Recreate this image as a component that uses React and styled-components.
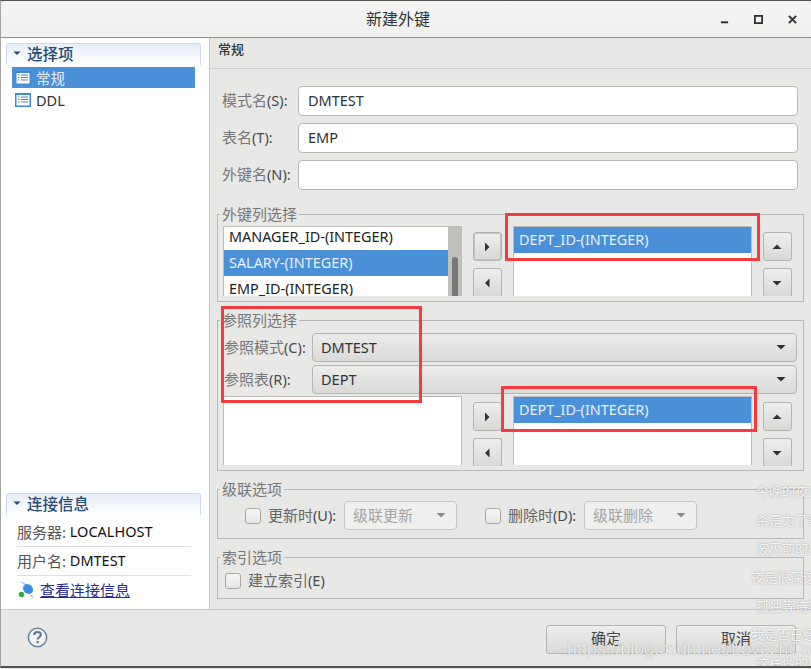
import React from 'react';
import styled, { createGlobalStyle } from 'styled-components';

const Global = createGlobalStyle`
  html, body { margin: 0; padding: 0; background: #e8e8e7; overflow: hidden; }
  * { box-sizing: border-box; }
  body { font-family: "Noto Sans", "Noto Sans CJK SC", sans-serif; font-size: 14.5px; color: #2e3436; }
`;

const Window = styled.div`
  position: relative;
  width: 811px;
  height: 668px;
  display: flex;
  flex-direction: column;
  overflow: hidden;
  background: #e8e8e7;
  border-top: 1px solid #55534f;
  border-bottom: 2px solid #55534f;
  border-left: 1px solid #a5a5a2;
`;

const TitleBar = styled.div`
  height: 37px;
  flex: none;
  display: grid;
  grid-template-columns: 1fr auto 1fr;
  align-items: center;
  background: linear-gradient(#f5f5f4, #f0f0ef);
  border-bottom: 1px solid #8f8f8b;
  border-radius: 6px 6px 0 0;
`;

const Title = styled.div`
  grid-column: 2;
  font-size: 16px;
  color: #2e3436;
  margin-right: 16px;
  padding-bottom: 2px;
`;

const Controls = styled.div`
  grid-column: 3;
  justify-self: end;
  display: flex;
  gap: 25px;
  margin-right: 14px;
  svg { display: block; width: 9px; height: 9px; }
`;

const Body = styled.div`
  flex: 1;
  min-height: 0;
  display: flex;
`;

const Sidebar = styled.aside`
  width: 209px;
  flex: none;
  background: #fff;
  border-right: 1px solid #c9c9c6;
  padding: 5px 0 0 5px;
  display: flex;
  flex-direction: column;
  justify-content: space-between;
`;

const SectionHead = styled.div`
  width: 195px;
  height: 22px;
  display: flex;
  align-items: center;
  gap: 6px;
  padding: 0 0 3px 6px;
  border: 1px solid #cddcec;
  border-bottom: none;
  border-radius: 3px 3px 0 0;
  background: linear-gradient(#e6eef7, #fff);
  color: #274b72;
  font-size: 15.5px;
  font-weight: 500;
`;

const NavList = styled.div`
  margin: 2px 0 0 6px;
  width: 183px;
  display: flex;
  flex-direction: column;
  gap: 3px;
`;

const NavRow = styled.div`
  height: 21px;
  display: flex;
  align-items: center;
  gap: 5px;
  padding: 0 0 ${p => (p.$active ? 0 : 3)}px 3px;
  background: ${p => (p.$active ? '#4a90d9' : 'transparent')};
  color: ${p => (p.$active ? '#e4eefa' : '#2e3436')};
  font-size: 14.5px;
`;

const InfoBlock = styled.div`
  display: flex;
  flex-direction: column;
  padding-bottom: 5px;
  ${SectionHead} { margin-bottom: 3px; }
`;

const InfoRow = styled.div`
  margin-left: 11px;
  width: 174px;
  height: 29px;
  padding-bottom: 2px;
  display: flex;
  align-items: center;
  border-bottom: 1px solid #dededc;
  font-size: 14.5px;
  color: #111;
  span { color: #555; font-size: 15px; }
`;

const LinkRow = styled.div`
  margin-left: 12px;
  height: 28px;
  padding-bottom: 2px;
  display: flex;
  align-items: center;
  gap: 4px;
  a { color: #2a2a9c; text-decoration: underline; font-size: 15px; }
`;

const Main = styled.main`
  flex: 1;
  min-width: 0;
  display: flex;
  flex-direction: column;
`;

const MainHead = styled.div`
  height: 31px;
  flex: none;
  padding: 1px 0 0 8px;
  font-size: 13px;
  font-weight: 500;
  color: #2e3436;
  border-bottom: 1px solid #cfcfcc;
`;

const Form = styled.div`
  padding: 17px 7px 0;
  display: flex;
  flex-direction: column;
`;

const FieldRow = styled.div`
  height: 30px;
  margin-bottom: 7px;
  display: flex;
  align-items: center;
  padding-left: 5px;
`;

const Label = styled.label`
  flex: none;
  width: ${p => p.$width || 76}px;
  padding-left: ${p => p.$inset || 0}px;
  padding-bottom: 3px;
  color: #777;
  font-size: 15px;
  white-space: nowrap;
`;

const Key = styled.span`
  color: #4a4a4a;
  font-size: 14.5px;
`;

const TextInput = styled.div`
  width: 500px;
  height: 100%;
  display: flex;
  align-items: center;
  padding: 0 0 2px 9px;
  background: #fff;
  border: 1px solid #b9b9b5;
  border-radius: 4px;
  font-size: 14.5px;
  color: #2e3436;
`;

const Group = styled.fieldset`
  margin: ${p => p.$top || 0}px 0 10px;
  padding: ${p => p.$pad};
  width: 587px;
  height: ${p => p.$height}px;
  border: 1px solid #b8b8b5;
  min-inline-size: 0;
`;

const Legend = styled.legend`
  margin-left: ${p => p.$shift}px;
  padding: 0 2px;
  font-size: 15px;
  line-height: 16px;
  color: #777;
`;

const Lists = styled.div`
  display: grid;
  grid-template-columns: 239px 29px 239px 29px;
  column-gap: 11px;
  align-items: start;
  margin-top: ${p => (p.$lift ? -1 : 0)}px;
`;

const ListBox = styled.div`
  position: relative;
  height: ${p => p.$height}px;
  background: #fff;
  border: 1px solid #bcbcb8;
  border-bottom: none;
  overflow: hidden;
  font-size: 14.4px;
  color: #2e3436;
`;

const ListRow = styled.div`
  height: 26px;
  display: flex;
  align-items: center;
  padding: 0 0 2px 5px;
  white-space: nowrap;
  background: ${p => (p.$selected ? '#4a90d9' : 'transparent')};
  color: ${p => (p.$selected ? '#e8f1fb' : '#222')};
`;

const ListScroller = styled.div`
  display: grid;
  grid-template-columns: 1fr 13px;
  height: 100%;
`;

const ScrolledRows = styled.div`
  margin-top: -3px;
`;

const ScrollTrack = styled.div`
  background: #bfbfbc;
  display: flex;
  justify-content: center;
  padding-top: 30px;
  i { display: block; width: 6px; height: 40px; border-radius: 3px; background: #777; }
`;

const Steppers = styled.div`
  display: flex;
  flex-direction: column;
  gap: 7px;
  padding-top: 6px;
`;

const StepButton = styled.button`
  width: 28.5px;
  height: 29px;
  padding: 0;
  display: flex;
  align-items: center;
  justify-content: center;
  border: 1px solid #b4b4b0;
  border-radius: 3px;
  background: linear-gradient(#eeeeed, #d8d8d6);
  box-shadow: ${p => (p.$focus ? 'inset 0 0 0 1px #c4c4c0' : 'none')};
  &:last-child { height: 28px; border-bottom: none; border-radius: 3px 3px 0 0; }
`;

const ComboRow = styled.div`
  height: 29px;
  margin-bottom: 3px;
  display: flex;
  align-items: center;
`;

const Combo = styled.div`
  width: ${p => p.$width}px;
  height: 29px;
  flex: none;
  display: flex;
  align-items: center;
  justify-content: space-between;
  padding: 0 10px 2px 8px;
  border: 1px solid ${p => (p.$disabled ? '#c6c6c2' : '#b4b4b0')};
  border-radius: 4px;
  background: ${p => (p.$disabled ? '#efefee' : 'linear-gradient(#ececeb, #d9d9d7)')};
  color: ${p => (p.$disabled ? '#a5a5a3' : '#2e3436')};
  font-size: ${p => (p.$disabled ? 15 : 14.5)}px;
`;

const OptionRow = styled.div`
  height: 29px;
  display: flex;
  align-items: center;
  margin-left: ${p => p.$indent}px;
`;

const CheckBox = styled.span`
  width: 16px;
  height: 16px;
  flex: none;
  margin-right: 7px;
  margin-left: ${p => p.$gap || 0}px;
  border: 1px solid #a8a8a4;
  border-radius: 3px;
  background: linear-gradient(#f6f6f5, #e6e6e5);
`;

const OptionLabel = styled.span`
  width: ${p => p.$width}px;
  flex: none;
  padding-bottom: 2px;
  color: #666;
  font-size: 15px;
  white-space: nowrap;
`;

const Footer = styled.footer`
  height: 57px;
  flex: none;
  display: flex;
  align-items: center;
  justify-content: space-between;
  padding: 0 15px 0 26px;
  border-top: 1px solid #c9c9c6;
  svg { margin-bottom: 2px; }
`;

const FooterButtons = styled.div`
  display: flex;
  gap: 10px;
  margin-top: 2px;
`;

const FooterButton = styled.button`
  width: 120px;
  height: 29px;
  padding: 0 0 3px;
  font-family: inherit;
  font-size: 15px;
  color: #444;
  border: 1px solid #b4b4b0;
  border-radius: 3px;
  background: linear-gradient(#eeeeed, #d9d9d7);
`;

const RedBox = styled.div`
  position: absolute;
  left: ${p => p.$x}px;
  top: ${p => p.$y}px;
  width: ${p => p.$w}px;
  height: ${p => p.$h}px;
  border: 3px solid #f53b3d;
  pointer-events: none;
`;

const Lyrics = styled.div`
  position: absolute;
  left: 744px;
  top: 476px;
  display: flex;
  flex-direction: column;
  pointer-events: none;
`;

const LyricLine = styled.div`
  height: 28.7px;
  line-height: 28.7px;
  padding-left: ${p => p.$indent}px;
  font-size: 13px;
  white-space: nowrap;
  color: rgba(255, 255, 255, 0.85);
  text-shadow: 0 0 2px rgba(130, 130, 130, 0.75);
`;

const Stamp = styled.div`
  position: absolute;
  left: 566px;
  top: 637px;
  font-family: "Liberation Sans", sans-serif;
  font-size: 17.8px;
  line-height: 22px;
  white-space: nowrap;
  color: rgba(255, 255, 255, 0.8);
  text-shadow: 0 0 1px rgba(120, 120, 120, 0.8);
  pointer-events: none;
`;

const trianglePoints = {
  right: '3,0.5 7.5,5 3,9.5',
  left: '7.5,0.5 3,5 7.5,9.5',
  up: '0.5,7 5,2.5 9.5,7',
  down: '0.5,3 5,7.5 9.5,3'
};

const Triangle = ({ dir, size = 10, color = '#2e3436' }) => (
  <svg width={size} height={size} viewBox="0 0 10 10">
    <polygon points={trianglePoints[dir]} fill={color} />
  </svg>
);

const PageIcon = () => (
  <svg width="16" height="16" viewBox="0 0 16 16">
    <rect x="0" y="1" width="16" height="14" fill="#3d8ad8" />
    <rect x="1.5" y="3" width="13" height="10.5" fill="#fff" />
    <path d="M3 5h1.5M3 7.5h1.5M3 10h1.5M6 5h7M6 7.5h7M6 10h7" stroke="#5a82ad" strokeWidth="1" />
  </svg>
);

const ConnectIcon = () => (
  <svg width="18" height="18" viewBox="0 0 18 18">
    <ellipse cx="10" cy="9" rx="5.5" ry="4.5" fill="#3c8ee0" transform="rotate(40 10 9)" />
    <path d="M3 2l4 2M7 4c-1 2-2 3-2 5M12 15l3 2" stroke="#8cbdec" strokeWidth="1.2" fill="none" />
    <circle cx="3.5" cy="14.5" r="2.8" fill="#2db341" />
  </svg>
);

const HelpIcon = () => (
  <svg width="21" height="21" viewBox="0 0 22 22">
    <circle cx="11" cy="11" r="9.6" fill="#f1f3f5" stroke="#6b84a0" strokeWidth="1.6" />
    <path d="M7.6 8.4c0-2 1.5-3.2 3.5-3.2s3.4 1.2 3.4 2.9c0 2.6-3.4 2.6-3.4 5" fill="none" stroke="#5d7692" strokeWidth="2.2" />
    <rect x="10" y="14.6" width="2.3" height="2.4" fill="#5d7692" />
  </svg>
);

const StepColumn = ({ first, second, focus }) => (
  <Steppers>
    <StepButton $focus={focus}><Triangle dir={first} /></StepButton>
    <StepButton><Triangle dir={second} /></StepButton>
  </Steppers>
);

const lyricLines = [
  { text: '今晚的夜空下', indent: 11 },
  { text: '杀是为了歌', indent: 11 },
  { text: '波灭前的出', indent: 11 },
  { text: '夜是很深这', indent: 6 },
  { text: '孤独等待黎', indent: 11 },
  { text: '我是否已经活', indent: 6 },
  { text: '这样做的后', indent: 11 }
];

export default function App() {
  return (
    <>
      <Global />
      <Window>
        <TitleBar>
          <Title>新建外键</Title>
          <Controls>
            <svg viewBox="0 0 10 10"><rect x="1" y="7" width="8" height="2.2" fill="#2e3436" /></svg>
            <svg viewBox="0 0 10 10"><rect x="1" y="1" width="8" height="8" fill="none" stroke="#2e3436" strokeWidth="2" /></svg>
            <svg viewBox="0 0 10 10"><path d="M1 1l8 8M9 1l-8 8" stroke="#2e3436" strokeWidth="2.2" /></svg>
          </Controls>
        </TitleBar>
        <Body>
          <Sidebar>
            <div>
              <SectionHead><Triangle dir="down" size={8} color="#274b72" />选择项</SectionHead>
              <NavList>
                <NavRow $active><PageIcon />常规</NavRow>
                <NavRow><PageIcon />DDL</NavRow>
              </NavList>
            </div>
            <InfoBlock>
              <SectionHead><Triangle dir="down" size={8} color="#274b72" />连接信息</SectionHead>
              <InfoRow><span>服务器:</span>&nbsp;LOCALHOST</InfoRow>
              <InfoRow><span>用户名:</span>&nbsp;DMTEST</InfoRow>
              <LinkRow><ConnectIcon /><a href="#info">查看连接信息</a></LinkRow>
            </InfoBlock>
          </Sidebar>
          <Main>
            <MainHead>常规</MainHead>
            <Form>
              <FieldRow><Label>模式名<Key>(S):</Key></Label><TextInput>DMTEST</TextInput></FieldRow>
              <FieldRow><Label>表名<Key>(T):</Key></Label><TextInput>EMP</TextInput></FieldRow>
              <FieldRow><Label>外键名<Key>(N):</Key></Label><TextInput /></FieldRow>
              <Group $height={96} $top={9} $pad="4px 5px 0">
                <Legend $shift={-3}>外键列选择</Legend>
                <Lists>
                  <ListBox $height={70}>
                    <ListScroller>
                      <ScrolledRows>
                        <ListRow>MANAGER_ID-(INTEGER)</ListRow>
                        <ListRow $selected>SALARY-(INTEGER)</ListRow>
                        <ListRow>EMP_ID-(INTEGER)</ListRow>
                      </ScrolledRows>
                      <ScrollTrack><i /></ScrollTrack>
                    </ListScroller>
                  </ListBox>
                  <StepColumn first="right" second="left" focus />
                  <ListBox $height={70}>
                    <ListRow $selected>DEPT_ID-(INTEGER)</ListRow>
                  </ListBox>
                  <StepColumn first="up" second="down" />
                </Lists>
              </Group>
              <Group $height={159} $pad="5px 5px 0">
                <Legend $shift={-3}>参照列选择</Legend>
                <ComboRow>
                  <Label $width={89} $inset={1}>参照模式<Key>(C):</Key></Label>
                  <Combo $width={485}>DMTEST<Triangle dir="down" /></Combo>
                </ComboRow>
                <ComboRow>
                  <Label $width={89} $inset={1}>参照表<Key>(R):</Key></Label>
                  <Combo $width={485}>DEPT<Triangle dir="down" /></Combo>
                </ComboRow>
                <Lists $lift>
                  <ListBox $height={69} />
                  <StepColumn first="right" second="left" />
                  <ListBox $height={69}>
                    <ListRow $selected>DEPT_ID-(INTEGER)</ListRow>
                  </ListBox>
                  <StepColumn first="up" second="down" />
                </Lists>
              </Group>
              <Group $height={58} $pad="4px 0 0">
                <Legend $shift={2}>级联选项</Legend>
                <OptionRow $indent={27}>
                  <CheckBox />
                  <OptionLabel $width={76}>更新时<Key>(U):</Key></OptionLabel>
                  <Combo $width={113} $disabled>级联更新<Triangle dir="down" color="#8a8a88" /></Combo>
                  <CheckBox $gap={28} />
                  <OptionLabel $width={76}>删除时<Key>(D):</Key></OptionLabel>
                  <Combo $width={113} $disabled>级联删除<Triangle dir="down" color="#8a8a88" /></Combo>
                </OptionRow>
              </Group>
              <Group $height={50} $pad="1px 0 0">
                <Legend $shift={2}>索引选项</Legend>
                <OptionRow $indent={7}>
                  <CheckBox />
                  <OptionLabel $width={90}>建立索引<Key>(E)</Key></OptionLabel>
                </OptionRow>
              </Group>
            </Form>
          </Main>
        </Body>
        <Footer>
          <HelpIcon />
          <FooterButtons>
            <FooterButton>确定</FooterButton>
            <FooterButton>取消</FooterButton>
          </FooterButtons>
        </Footer>
        <RedBox $x={504} $y={212} $w={255} $h={48} />
        <RedBox $x={220} $y={305} $w={201} $h={97} />
        <RedBox $x={500} $y={385} $w={256} $h={46} />
        <Lyrics>
          {lyricLines.map(line => (
            <LyricLine key={line.text} $indent={line.indent}>{line.text}</LyricLine>
          ))}
        </Lyrics>
        <Stamp>https://blog.csdn.net/LovezhCsdn</Stamp>
      </Window>
    </>
  );
}
